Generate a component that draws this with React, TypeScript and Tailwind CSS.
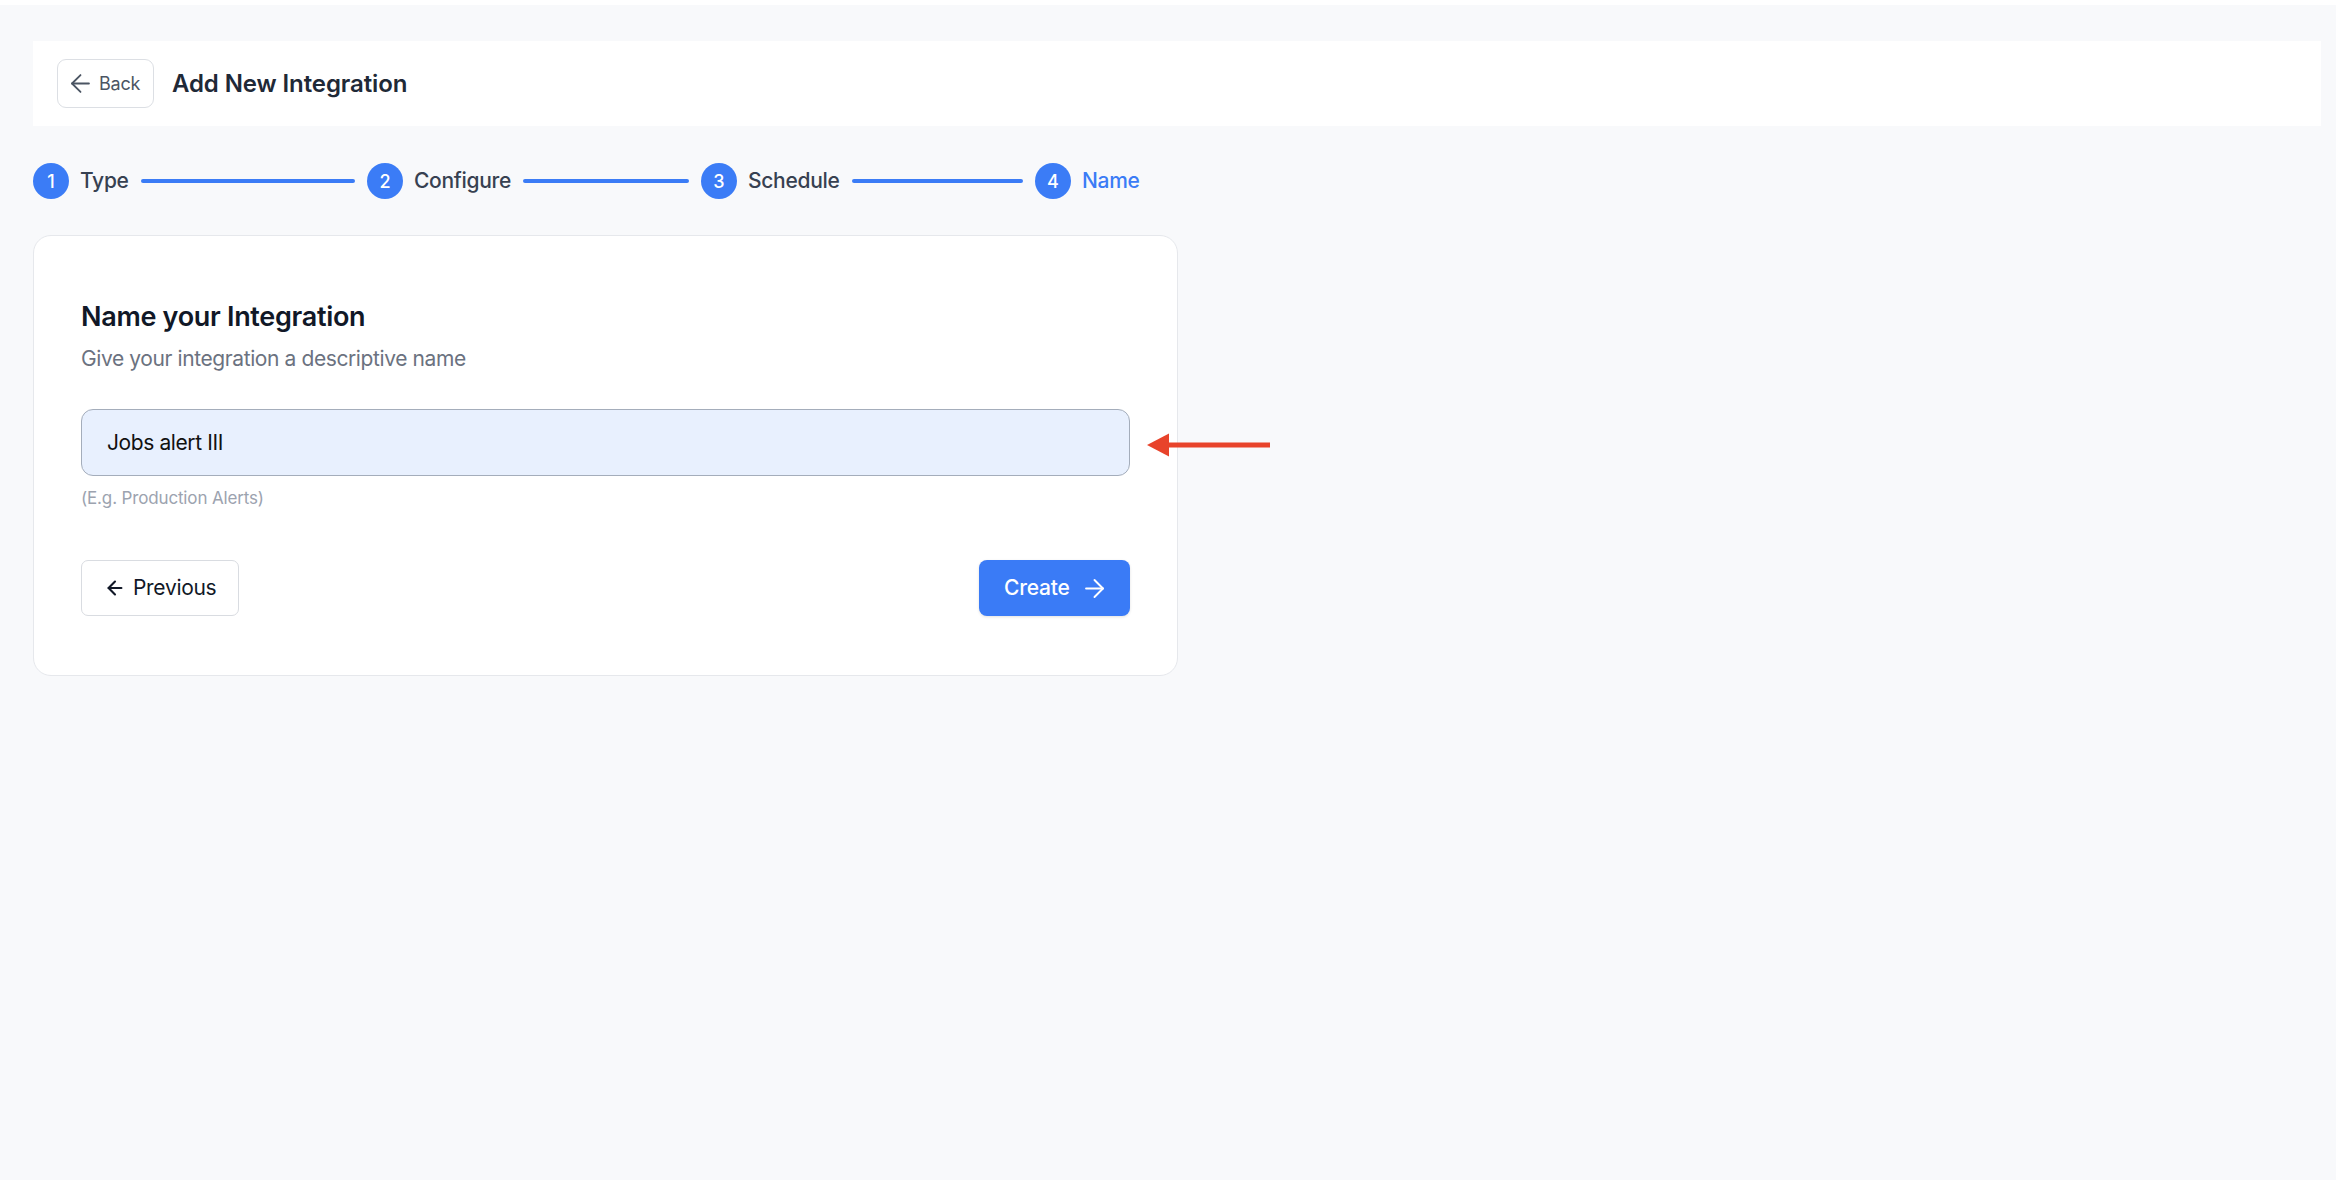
import React from "react";
import { ArrowLeft, ArrowRight } from "lucide-react";

const steps = ["Type", "Configure", "Schedule", "Name"];

export default function App() {
  return (
    <div className="min-h-screen bg-[#f8f9fb] font-['Inter',sans-serif]">
      <div className="h-[5px] bg-white" />
      <div className="pt-[36px] pl-[33px] pr-[15px]">
        {/* Header */}
        <div className="flex h-[85px] items-center gap-[18px] bg-white pl-6">
          <button className="flex h-[49px] w-[97px] items-center gap-[4px] rounded-[9px] border border-[#dcdfe4] bg-white pl-[8px] text-[18px] tracking-[-0.2px] text-[#4b5563]">
            <ArrowLeft size={29} strokeWidth={1.5} />
            <span>Back</span>
          </button>
          <h1 className="text-[24px] font-semibold tracking-[-0.1px] text-[#1f2937]">Add New Integration</h1>
        </div>

        {/* Stepper */}
        <div className="mt-[37px] flex h-[36px] w-[1324px] items-center gap-3">
          {steps.map((s, i) => (
            <div key={s} className="flex flex-1 items-center gap-[11px]">
              <div className="flex h-[36px] w-[36px] shrink-0 items-center justify-center rounded-full bg-[#3b7cf6] text-[18px] font-medium text-white">
                {i + 1}
              </div>
              <span
                className={
                  i === 3
                    ? "text-[21px] font-medium tracking-[-0.3px] text-[#3b7cf6]"
                    : "text-[21px] font-medium tracking-[-0.3px] text-[#374151]"
                }
              >
                {s}
              </span>
              {i < 3 && <div className="ml-px h-[4px] flex-1 rounded-full bg-[#3b7cf6]" />}
            </div>
          ))}
        </div>

        {/* Card */}
        <div className="relative mt-[36px] w-[1145px] rounded-[18px] border border-[#e6e8ec] bg-white px-[47px] pt-[60px] pb-[59px]">
          <h2 className="text-[27px] leading-[42px] font-semibold tracking-[-0.3px] text-[#111827]">Name your Integration</h2>
          <p className="mt-[6px] text-[21px] leading-[30px] tracking-[-0.4px] text-[#6b7280]">Give your integration a descriptive name</p>
          <div className="mt-[35px] flex h-[67px] items-center rounded-[12px] border border-[#a4adbb] bg-[#e8f0fe] pl-[25px] text-[21px] tracking-[-0.4px] text-[#111111]">
            Jobs alert III
          </div>
          <p className="mt-[9px] text-[17px] leading-[27px] tracking-[-0.15px] text-[#9ca3af]">(E.g. Production Alerts)</p>
          <div className="mt-[48px] flex items-center justify-between">
            <button className="flex h-[56px] w-[158px] items-center gap-[7px] rounded-[7px] border border-[#d9dce1] bg-white pl-[22px] text-[21px] tracking-[-0.3px] text-[#111827]">
              <ArrowLeft size={22} strokeWidth={2.3} />
              <span>Previous</span>
            </button>
            <button className="flex h-[56px] w-[151px] items-center gap-[10px] rounded-[8px] bg-[#3a7bf6] pl-[25px] text-[21px] font-medium tracking-[-0.2px] text-white shadow-[0_1px_3px_rgba(0,0,0,0.12)]">
              <span>Create</span>
              <ArrowRight size={29} strokeWidth={1.6} />
            </button>
          </div>

          {/* Red annotation arrow */}
          <svg
            className="absolute left-[1112px] top-[196px]"
            width="126"
            height="26"
            viewBox="0 0 126 26"
          >
            <line x1="18" y1="13" x2="124" y2="13" stroke="#e8432b" strokeWidth="5" />
            <polygon points="1,13 23,1.5 23,24.5" fill="#e8432b" />
          </svg>
        </div>
      </div>
    </div>
  );
}
